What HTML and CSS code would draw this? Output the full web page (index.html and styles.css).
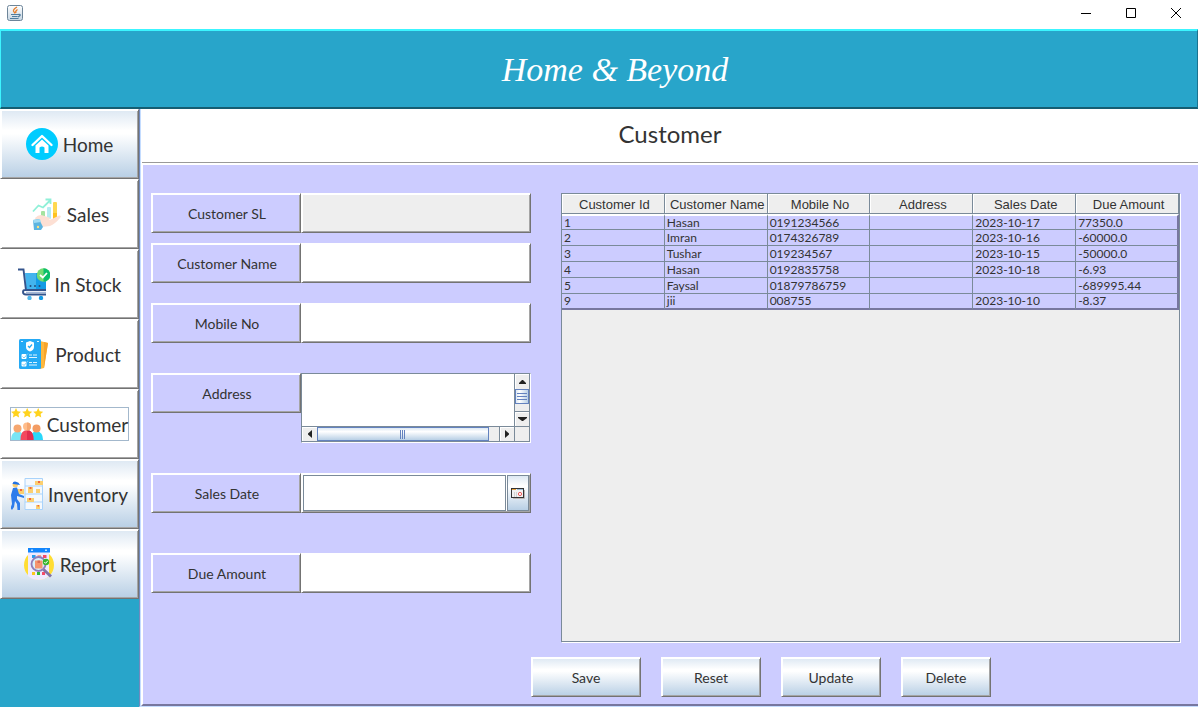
FILE: index.html
```html
<!DOCTYPE html>
<html lang="en">
<head>
<meta charset="utf-8">
<title>Home &amp; Beyond</title>
<link rel="stylesheet" href="styles.css">
</head>
<body>
<div class="window">
  <div class="titlebar">
    <svg class="java" viewBox="0 0 16 16" width="16" height="16" aria-hidden="true">
      <defs><linearGradient id="jv" x2="0" y2="1"><stop stop-color="#fff"/><stop offset="1" stop-color="#c5d5e2"/></linearGradient></defs>
      <rect x=".5" y=".5" width="15" height="15" rx="2" fill="url(#jv)" stroke="#6d8599"/>
      <path d="M10 2Q6 4.500 6.500 6L8 8.500M10.500 4.500Q8 6 9 8" fill="none" stroke="#e47b28" stroke-width="1.300"/>
      <path d="M4 9.500H11M5 11.500H10.500M3 13.500H11.500M11 9.500Q14 9 13 10.500L11 12" fill="none" stroke="#4f7da0" stroke-width="1.200"/>
    </svg>
    <div class="controls">
      <button type="button" aria-label="Minimize"><svg width="10" height="11" viewBox="0 0 10 11"><path d="M0 5.500H10"/></svg></button>
      <button type="button" aria-label="Maximize"><svg width="10" height="10" viewBox="0 0 10 10"><path d="M.5 .5H9.500V9.500H.5Z"/></svg></button>
      <button type="button" aria-label="Close"><svg width="10" height="10" viewBox="0 0 10 10"><path d="M0 0L10 10M10 0L0 10"/></svg></button>
    </div>
  </div>
  <header class="banner"><h1>Home &amp; Beyond</h1></header>
  <div class="body">
    <nav class="sidebar">
      <button type="button" class="nav shaded"><span class="nav-in">
        <svg class="ico" viewBox="0 0 32 32"><circle cx="16" cy="16" r="16" fill="#0cf"/><path d="M6.500 17L16 8L25.500 17" fill="none" stroke="#fff" stroke-width="2.400" stroke-linecap="round" stroke-linejoin="round"/><path d="M9.500 17.500L16 11.500L22.500 17.500V25H18.500V19.500Q16 17.500 13.500 19.500V25H9.500Z" fill="#fff"/></svg>
        Home</span></button>
      <button type="button" class="nav"><span class="nav-in">
        <svg class="ico" viewBox="0 0 32 32"><path d="M3 13.500L8.500 7.500L13 9.500L20 2.500M15.500 1.500H20.500V6" fill="none" stroke="#8ff0d8" stroke-width="1.800"/><rect x="11" y="13" width="4" height="8" rx="1" fill="#a5e3a0"/><rect x="17" y="9" width="4" height="12" rx="1" fill="#b5ecf2"/><rect x="23" y="4" width="4" height="17" rx="1" fill="#ffd84f"/><rect x="23" y="15" width="4" height="6" fill="#ffc21f"/><path d="M5 20Q9 16 13 17.500L19 19.500Q21 20 19 22L22 21L29 17.500Q32 17 30 20Q25 26 20 28L12 29L7 25Z" fill="#fde0d4"/><path d="M3 22L9 21L13 29L11 32H4Z" fill="#5cb4e0"/><path d="M3 22L10 21L11 24L4 25Z" fill="#a2dcf4"/><circle cx="8" cy="29" r="1.200" fill="#ffe27a"/></svg>
        Sales</span></button>
      <button type="button" class="nav"><span class="nav-in">
        <svg class="ico" viewBox="0 0 32 32"><path d="M7 5H28V21H8Z" fill="#43b4ee"/><path d="M18 5H28V21H18Z" fill="#149be5"/><path d="M0 1.500H5.500L8 22.500M28 22H7Q5 22 5 24Q5 26.500 8 26.500H28" fill="none" stroke="#34548c" stroke-width="1.900"/><path d="M8 24.300H28" stroke="#8ba6cf" stroke-width="1"/><circle cx="12.500" cy="18" r="1" fill="#264d7b"/><circle cx="17" cy="18" r="1" fill="#264d7b"/><circle cx="21.500" cy="18" r="1" fill="#264d7b"/><circle cx="11.500" cy="30" r="2.200" fill="#4fb8ec"/><circle cx="23" cy="30" r="2.200" fill="#149be5"/><circle cx="25.500" cy="7" r="6.800" fill="#74da72"/><path d="M25.500 .2A6.800 6.800 0 0 1 25.500 13.800Z" fill="#0abf6b"/><path d="M22 7L24.800 9.500L29 5" fill="none" stroke="#fff" stroke-width="1.800"/></svg>
        In Stock</span></button>
      <button type="button" class="nav"><span class="nav-in">
        <svg class="ico" viewBox="0 0 32 32"><path d="M22 3L30 5L26 30L22 31Z" fill="#ffb83d"/><path d="M26 4L30 5L26 30Z" fill="#f7a52d"/><rect x="1" y="1" width="22" height="30" rx="1.500" fill="#25aaf5"/><path d="M12 3L16 4.500V9Q16 12 12 13.500Q8 12 8 9V4.500Z" fill="#fff"/><path d="M10 8L11.500 9.500L14 6.500" fill="none" stroke="#25aaf5" stroke-width="1.300"/><rect x="3.500" y="16" width="5" height="5" rx="1" fill="#fff"/><rect x="3.500" y="23.500" width="5" height="5" rx="1" fill="#fff"/><path d="M4.500 18.500L6 20L10 15.500M4.500 26L6 27.500L10 23" fill="none" stroke="#7cc9f5" stroke-width="1"/><path d="M11 17H14M15 17H19M11 19.500H19M11 24.500H14M15 24.500H19M11 27H19M3 3.500H5M19 3.500H21" stroke="#dff3ff" stroke-width="1.200"/></svg>
        Product</span></button>
      <button type="button" class="nav"><span class="nav-in focused">
        <svg class="ico" viewBox="0 0 32 32"><path id="st" d="M5 0L6.500 3.300L10 3.700L7.400 6L8.100 9.500L5 7.700L1.900 9.500L2.600 6L0 3.700L3.500 3.300Z" fill="#ffd31e"/><use href="#st" x="11.200"/><use href="#st" x="22.200"/><path d="M0 32Q0 23.500 6.500 23.500Q13 23.500 13 32Z" fill="#78e5f5"/><path d="M19 32Q19 23.500 25.500 23.500Q32 23.500 32 32Z" fill="#2ad7fa"/><circle cx="6.500" cy="20.500" r="4" fill="#f6a770"/><circle cx="25.500" cy="20.500" r="4" fill="#f39c63"/><path d="M9.500 32Q9.500 22 16 22Q22.500 22 22.500 32Z" fill="#f4485f"/><path d="M16 22Q22.500 22 22.500 32H16Z" fill="#e22d4f"/><circle cx="16" cy="18.500" r="4" fill="#ffbd8b"/><path d="M16 14.500A4 4 0 0 1 16 22.500Z" fill="#f6a770"/></svg>
        Customer</span></button>
      <button type="button" class="nav shaded"><span class="nav-in">
        <svg class="ico" viewBox="0 0 32 32"><path d="M14 .5H31.500V31.500H14ZM14 8H31.500M14 16H31.500M14 24H31.500" fill="#f5f9fd" stroke="#a9d3fb"/><path d="M24 3H32V7H24ZM17 9H22V15H17ZM25 11H29V15H25ZM16 20H23V24H16ZM25 27H29V31H25ZM6 11H13V16H6Z" fill="#fbcf70"/><path d="M27 3H29V5H27ZM18.500 9H20.500V11H18.500ZM18 20H20V22H18ZM26.500 27H28V28.500H26.500ZM9 11H11V13H9Z" fill="#f1663d"/><circle cx="4.300" cy="6.800" r="2.700" fill="#fbcf70"/><path d="M1.500 6Q2 3 5 3.700Q8 4 9 7L2 6Z" fill="#2373e4"/><path d="M2 10L6 9.500L8 16L13 18V20L6 18L6 21L9 25V32H6.500L6 26L4 23L3 29L1 32L-.5 30L1 26L0 17Z" fill="#2d7ceb"/></svg>
        Inventory</span></button>
      <button type="button" class="nav shaded"><span class="nav-in">
        <svg class="ico" viewBox="0 0 32 32"><circle cx="16" cy="17" r="15" fill="#fd3"/><path d="M5 2H26V28Q22 32 16 32Q9 32 5 28Z" fill="#efeaff"/><rect x="5" width="22" height="4.500" fill="#1285fc"/><path d="M8 2.300H10M22 2.300H24" stroke="#bfe0ff" stroke-width="1.500"/><path d="M9 7H12.500V10H9Z" fill="#299ded"/><path d="M14.500 7H18V10H14.500Z" fill="#f8a486"/><path d="M20 7H23.500V10H20Z" fill="#f44a68"/><path d="M9 24H12V27H9Z" fill="#fac71c"/><path d="M14 24H17V27H14Z" fill="#30b836"/><path d="M19 24H22V27H19Z" fill="#f44a68"/><circle cx="15.500" cy="16" r="7" fill="#d9f0fb" stroke="#8f7db8" stroke-width="1.800"/><rect x="12" y="12.500" width="7.500" height="8" fill="#f59570"/><path d="M14.500 12.500H17V15H14.500Z" fill="#dc6c55"/><path d="M20.500 21.500L28 28.500" stroke="#8373a4" stroke-width="3"/><circle cx="23" cy="14" r="3.200" fill="#39b62e"/><path d="M21.300 14L22.600 15.300L24.800 12.800" fill="none" stroke="#fff"/></svg>
        Report</span></button>
    </nav>
    <main class="main">
      <h2 class="heading">Customer</h2>
      <div class="panel">
        <div class="columns">
          <form class="form" id="customer-form">
            <div class="row"><label class="bevel" for="sl">Customer SL</label><input class="bevel disabled" id="sl" readonly></div>
            <div class="row gap-s"><label class="bevel" for="name">Customer Name</label><input class="bevel" id="name"></div>
            <div class="row gap-m"><label class="bevel" for="mobile">Mobile No</label><input class="bevel" id="mobile"></div>
            <div class="row gap-l"><label class="bevel" for="address">Address</label>
              <div class="scrollpane">
                <textarea id="address"></textarea>
                <div class="vbar">
                  <button type="button" class="arrow" aria-label="Scroll up"><svg width="7" height="4" viewBox="0 0 7 4"><path d="M3 0H4L7 3V4H0V3Z"/></svg></button>
                  <div class="thumb"><svg width="10" height="7" viewBox="0 0 10 7"><path d="M0 .5H10M0 3.500H10M0 6.500H10"/></svg></div>
                  <button type="button" class="arrow end" aria-label="Scroll down"><svg width="9" height="4" viewBox="0 0 9 4"><path d="M0 0H9V1L5 4H4L0 1Z"/></svg></button>
                </div>
                <div class="hbar">
                  <button type="button" class="arrow" aria-label="Scroll left"><svg width="4" height="8" viewBox="0 0 4 8"><path d="M4 0V8L0 4.500V3.500Z"/></svg></button>
                  <div class="thumb"><svg width="6" height="9" viewBox="0 0 6 9"><path d="M.5 0V9M2.500 0V9M4.500 0V9"/></svg></div>
                  <button type="button" class="arrow end" aria-label="Scroll right"><svg width="4" height="8" viewBox="0 0 4 8"><path d="M0 0V8L4 4.500V3.500Z"/></svg></button>
                </div>
                <div class="corner"></div>
              </div>
            </div>
            <div class="row gap-l"><label class="bevel" for="date">Sales Date</label>
              <div class="datebox bevel"><input id="date"><button type="button" aria-label="Choose date"><svg width="14" height="11" viewBox="0 0 14 11"><path d="M2 10.500H13.500V2" fill="none" stroke="#bcb5b2"/><rect x=".5" y=".5" width="12" height="9" fill="#f1f1f1" stroke="#333"/><path d="M1 1.500H5" stroke="#e9a13b"/><path d="M6 1.500H12" stroke="#9dbbd5"/><path d="M3.500 4V9M5.500 4V9" stroke="#d2d2d2"/><circle cx="9" cy="6" r="1.600" fill="#fff" stroke="#e55"/></svg></button></div>
            </div>
            <div class="row gap-xl"><label class="bevel" for="due">Due Amount</label><input class="bevel" id="due"></div>
          </form>
          <div class="tablepane">
            <table>
              <thead><tr><th>Customer Id</th><th>Customer Name</th><th>Mobile No</th><th>Address</th><th>Sales Date</th><th>Due Amount</th></tr></thead>
              <tbody>
                <tr><td>1</td><td>Hasan</td><td>0191234566</td><td></td><td>2023-10-17</td><td>77350.0</td></tr>
                <tr><td>2</td><td>Imran</td><td>0174326789</td><td></td><td>2023-10-16</td><td>-60000.0</td></tr>
                <tr><td>3</td><td>Tushar</td><td>019234567</td><td></td><td>2023-10-15</td><td>-50000.0</td></tr>
                <tr><td>4</td><td>Hasan</td><td>0192835758</td><td></td><td>2023-10-18</td><td>-6.93</td></tr>
                <tr><td>5</td><td>Faysal</td><td>01879786759</td><td></td><td></td><td>-689995.44</td></tr>
                <tr><td>9</td><td>jii</td><td>008755</td><td></td><td>2023-10-10</td><td>-8.37</td></tr>
              </tbody>
            </table>
          </div>
        </div>
        <div class="actions">
          <button type="submit" form="customer-form" class="bevel shaded wide">Save</button>
          <button type="button" class="bevel shaded">Reset</button>
          <button type="button" class="bevel shaded">Update</button>
          <button type="button" class="bevel shaded narrow">Delete</button>
        </div>
      </div>
    </main>
  </div>
</div>
</body>
</html>
```
FILE: styles.css
```css
* { box-sizing: border-box; }
body {
  margin: 0;
  color: #333;
  background: #fff;
  font-family: Lato, "Open Sans", sans-serif;
  font-size: 14px;
}
button, input, textarea { font: inherit; color: inherit; margin: 0; border-radius: 0; }
button { padding: 0; }
svg { display: block; }
.window { display: flex; flex-direction: column; min-height: 100vh; }

.titlebar { display: flex; justify-content: space-between; align-items: center; height: 29px; padding: 0 0 3px 7px; }
.controls { display: flex; }
.controls button { display: grid; place-items: center; width: 45px; height: 26px; border: 0; background: none; }
.controls path { fill: none; stroke: #000; }

.banner {
  display: grid;
  place-items: center;
  height: 80px;
  padding: 2px 0 0 32px;
  background: #28a5ca;
  border: 2px solid;
  border-width: 2px 1px 2px 1px;
  border-color: #3cf5ff #197390 #155d72 #3cf5ff;
}
.banner h1 { margin: 0; color: #fff; font: italic 34px "Liberation Serif", serif; }

.body { display: flex; flex: 1; }
.sidebar { width: 139px; background: #28a5ca; flex: none; }
.nav {
  display: grid;
  place-items: center;
  width: 100%;
  height: 70px;
  background: #fff;
  border: 1px solid;
  border-color: #fff #737373 #737373 #fff;
  box-shadow: inset 1px 1px #fff, inset -1px -1px #a5a5a5;
  font-size: 19px;
}
.nav.shaded, .shaded { background: linear-gradient(#dde8f3, #fff 30%, #fff 35%, #b8cfe5); }
.nav-in { display: flex; align-items: center; justify-content: center; gap: 5px; height: 34px; border: 1px solid transparent; white-space: nowrap; }
.nav-in.focused { border-color: #a3b8cc; gap: 4px; }
.ico { width: 32px; height: 32px; flex: none; }

.main { display: flex; flex-direction: column; flex: 1; border-left: 1px solid #7089bd; border-bottom: 1px solid #c4dcff; box-shadow: inset 1px 0 #c4dcff; padding-left: 1px; }
.heading {
  display: grid;
  place-items: center;
  height: 54px;
  margin: 0 0 0 1px;
  padding-bottom: 5px;
  border-bottom: 1px solid #999;
  font-size: 24px;
  font-weight: 400;
}
.panel {
  flex: 1;
  background: #ccf;
  border: 2px solid #fff;
  border-width: 2px 0 2px 2px;
  border-bottom-color: #77779f;
  padding: 28px 18px 7px 8px;
}
.bevel {
  border: 1px solid;
  border-color: #fff #737373 #737373 #fff;
  box-shadow: inset 1px 1px #fff, inset -1px -1px #a5a5a5;
}
.columns { display: flex; gap: 30px; }
.form { width: 380px; flex: none; }
.row { display: grid; grid-template-columns: 150px 1fr; align-items: start; }
.row label { display: grid; place-items: center; height: 40px; padding-left: 2px; }
.row > input { width: 100%; height: 40px; padding: 0 6px; background: #fff; }
.row > input.disabled { background: #eee; }
.gap-s { margin-top: 10px; }
.gap-m { margin-top: 20px; }
.gap-l { margin-top: 30px; }
.gap-xl { margin-top: 40px; }

.scrollpane {
  display: grid;
  grid-template: 52px 16px / 1fr 16px;
  height: 70px;
  border: 1px solid #7a8a99;
  border-right-color: #fff;
  border-bottom-color: #fff;
  background: #eee;
}
.scrollpane textarea { width: 100%; height: 52px; padding: 2px 4px; border: 0; resize: none; overflow: hidden; background: #fff; }
.vbar, .hbar { display: flex; background: #eee; }
.vbar { flex-direction: column; border: 1px solid #7a8a99; border-width: 0 1px; }
.hbar { border: 1px solid #7a8a99; border-width: 1px 0; }
.corner { border: 1px solid #7a8a99; }
.arrow { display: grid; place-items: center; flex: none; width: 15px; height: 14px; border: 0; background: #eee; box-shadow: inset 1px 1px #fff; }
.vbar .arrow { width: 14px; height: 15px; }
.arrow path { fill: #222; }
.vbar .end { margin-top: auto; border-top: 1px solid #7a8a99; }
.hbar .end { margin-left: auto; border-left: 1px solid #7a8a99; }
.thumb { display: grid; place-items: center; border: 1px solid #6382bf; background: linear-gradient(#dde8f3, #fff 30%, #b8cfe5); }
.thumb path { stroke: #6382bf; }
.vbar .thumb { height: 15px; background: linear-gradient(90deg, #dde8f3, #fff 30%, #b8cfe5); }
.hbar .thumb { flex: 0 0 172px; }

.datebox { display: flex; height: 40px; padding: 1px; background: #fff; }
.datebox input { flex: 1; min-width: 0; border: 1px solid #7a8a99; padding: 0 4px; background: #fff; }
.datebox button { display: grid; place-items: center; width: 22px; margin-left: 1px; border: 1px solid #7a8a99; background: linear-gradient(#dde8f3, #fff 30%, #b8cfe5); }

.tablepane { flex: 1; min-width: 0; height: 449px; border: 1px solid #7a8a99; box-shadow: 1px 1px #fff; background: #eee; }
table { width: 100%; table-layout: fixed; border-collapse: separate; border-spacing: 0; }
th {
  height: 20px;
  padding: 1px 0 0 3px;
  background: #eee;
  border: 1px solid #7a8a99;
  border-width: 0 1px 1px 0;
  box-shadow: inset 1px 1px #fff;
  font: 13px "Liberation Sans", sans-serif;
  white-space: nowrap;
}
td {
  height: 16px;
  padding: 0 2px;
  background: #ccf;
  border: 1px solid #7a8a99;
  border-width: 0 1px 1px 0;
  font-size: 12px;
  line-height: 15px;
}
tbody tr:first-child td { border-top: 2px solid #fff; line-height: 12px; }
tbody tr:last-child td { border-bottom: 2px solid #77779f; line-height: 14px; }
td:last-child { border-right: 2px solid #77779f; }

.actions { display: flex; gap: 20px; padding: 15px 0 0 380px; }
.actions button { width: 100px; height: 40px; }
.actions .wide { width: 110px; }
.actions .narrow { width: 90px; }
```
